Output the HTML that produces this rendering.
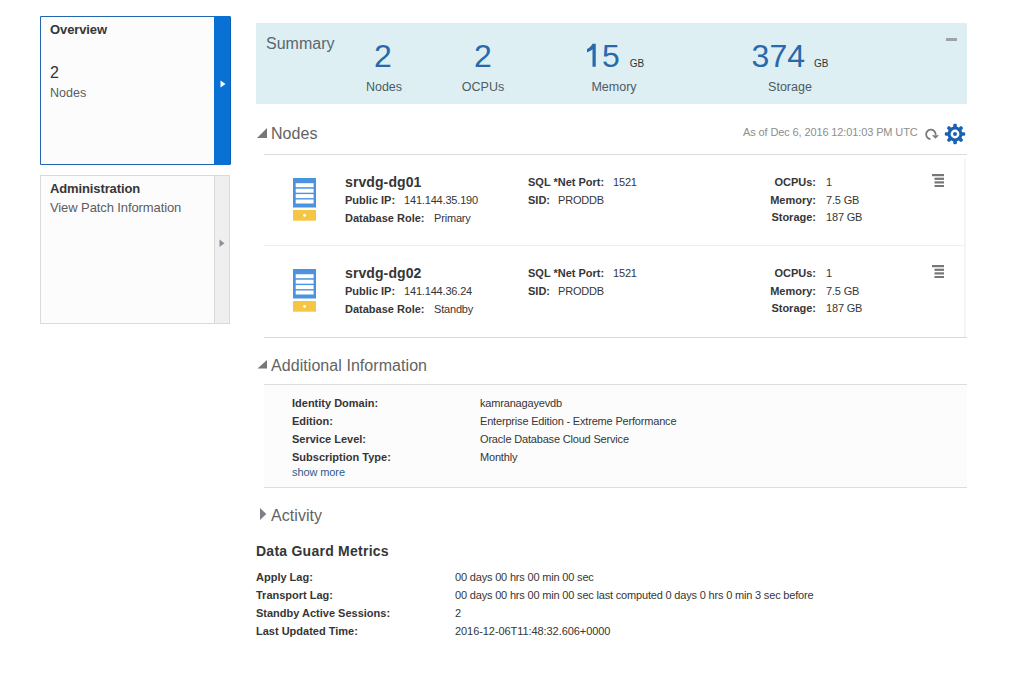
<!DOCTYPE html>
<html><head><meta charset="utf-8">
<style>
html,body{margin:0;padding:0;background:#fff;width:1031px;height:681px;overflow:hidden;position:relative}
body{font-family:"Liberation Sans",sans-serif;color:#363636}
.t{position:absolute;white-space:nowrap;line-height:20px}
.b{font-weight:bold}
.f11{font-size:11px;letter-spacing:-0.18px}
.f11.b{letter-spacing:0}.f12{font-size:12px}.f13{font-size:13px}.f14{font-size:14px}.f16{font-size:16px}
.box{position:absolute;box-sizing:border-box}
.hr{position:absolute;height:1px;background:#dcdcdc}
.num{position:absolute;font-size:32px;line-height:40px;color:#2769ab;white-space:nowrap}
.lab{position:absolute;font-size:12.5px;line-height:20px;color:#4f5a63;white-space:nowrap}
.gb{font-size:10px;color:#333;margin-left:9px}
.g{color:#5c5c5c}
.hd{color:#636363;letter-spacing:0.06px}
</style></head><body>

<!-- left nav -->
<div class="box" style="left:40px;top:16px;width:191px;height:149px;border:1px solid #2266b0;border-radius:0 2px 2px 0;background:#fcfcfc"></div>
<div class="box" style="left:214px;top:16px;width:17px;height:149px;background:#0871d3;border-right:1px solid #0b5fb6;border-radius:0 2px 2px 0"></div>
<svg style="position:absolute;left:219px;top:79px" width="8" height="10"><polygon points="1.5,1.5 6.5,5 1.5,8.5" fill="#fff"/></svg>
<div class="t f13 b" style="left:50px;top:20px;letter-spacing:-0.1px">Overview</div>
<div class="t f16" style="left:50px;top:63px;color:#333">2</div>
<div class="t g" style="left:50px;top:83px;font-size:12.5px">Nodes</div>

<div class="box" style="left:40px;top:175px;width:190px;height:149px;border:1px solid #dadada;background:#fcfcfc"></div>
<div class="box" style="left:214px;top:176px;width:15px;height:147px;background:#efefef;border-left:1px solid #dadada"></div>
<svg style="position:absolute;left:218px;top:238px" width="8" height="10"><polygon points="1.5,1.5 6.5,5.3 1.5,9.1" fill="#8a919b"/></svg>
<div class="t f13 b" style="left:50px;top:179px;letter-spacing:-0.12px">Administration</div>
<div class="t f13 g" style="left:50px;top:198px;letter-spacing:-0.1px">View Patch Information</div>

<!-- summary -->
<div class="box" style="left:256px;top:23px;width:711px;height:81px;background:#ddeff2"></div>
<div class="t f16" style="left:266px;top:34px;color:#5b6670">Summary</div>
<div class="box" style="left:946px;top:38px;width:11px;height:3px;background:#9aa3a8"></div>

<div class="num" style="left:333px;width:100px;top:36px;text-align:center">2</div>
<div class="lab" style="left:334px;width:100px;top:77px;text-align:center">Nodes</div>
<div class="num" style="left:433px;width:100px;top:36px;text-align:center">2</div>
<div class="lab" style="left:433px;width:100px;top:77px;text-align:center">OCPUs</div>
<div class="num" style="left:584.25px;top:36px"><span style="display:inline-block;width:17.8px;height:1px"></span>5<span class="gb" style="margin-left:10px">GB</span></div>
<svg style="position:absolute;left:584px;top:41px" width="16" height="28" viewBox="0 0 16 28"><path d="M8.5 2.8 L11.75 2.8 L11.75 25.8 L8.5 25.8 L8.5 8.2 C7.2 9.4 5 10.5 3 11.2 L3 8 C5 7.2 7.3 5.2 8.5 2.8Z" fill="#2769ab"/></svg>
<div class="lab" style="left:564px;width:100px;top:77px;text-align:center">Memory</div>
<div class="num" style="left:740px;width:100px;top:36px;text-align:center">374<span class="gb">GB</span></div>
<div class="lab" style="left:740px;width:100px;top:77px;text-align:center">Storage</div>

<!-- nodes header -->
<svg style="position:absolute;left:256px;top:127px" width="12" height="12"><polygon points="1,11 11,11 11,1" fill="#777"/></svg>
<div class="t f16 hd" style="left:271px;top:124px">Nodes</div>
<div class="t f11" style="left:743px;top:122px;color:#8e8e8e;letter-spacing:-0.12px">As of Dec 6, 2016 12:01:03 PM UTC</div>
<div class="hr" style="left:264px;top:154px;width:703px"></div>
<svg style="position:absolute;left:923px;top:126px" width="18" height="16" viewBox="0 0 18 16">
<path d="M7.5 13.1 A4.75 4.75 0 1 1 12.6 8.8" fill="none" stroke="#7a7a7a" stroke-width="1.8"/>
<polygon points="9,9.3 16,9.3 12.5,12.8" fill="#7a7a7a"/>
</svg>
<svg style="position:absolute;left:944.2px;top:122.9px" width="22" height="22" viewBox="-11 -11 22 22">
<g fill="#1a61b0">
<circle r="7.5"/>
<rect x="-1.75" y="-10.2" width="3.6" height="20.4" rx="1.3"/>
<rect x="-1.75" y="-10.2" width="3.6" height="20.4" rx="1.3" transform="rotate(45)"/>
<rect x="-1.75" y="-10.2" width="3.6" height="20.4" rx="1.3" transform="rotate(90)"/>
<rect x="-1.75" y="-10.2" width="3.6" height="20.4" rx="1.3" transform="rotate(135)"/>
</g>
<circle r="4.4" fill="#fff"/>
<circle r="2" fill="#1a61b0"/>
</svg>



<!-- node cards -->
<div class="box" style="left:964px;top:158px;width:2px;height:179px;background:#f5f5f5"></div>
<div class="hr" style="left:264px;top:245px;width:700px;background:#eeeeee"></div>
<div class="hr" style="left:264px;top:337px;width:703px;background:#d9d9d9"></div>

<svg style="position:absolute;left:293px;top:178px" width="23" height="43" viewBox="0 0 23 43">
<rect x="0" y="0" width="23" height="29.5" fill="#4b93df"/>
<rect x="2.7" y="5.2" width="17.9" height="4" fill="#fff"/>
<rect x="2.7" y="10.7" width="17.9" height="4" fill="#fff"/>
<rect x="2.7" y="16.1" width="17.9" height="4" fill="#fff"/>
<rect x="2.7" y="21.5" width="17.9" height="4" fill="#fff"/>
<rect x="0" y="32" width="23" height="10.7" fill="#f5c646"/>
<circle cx="11.6" cy="37.4" r="1.4" fill="#fff"/>
</svg>
<div class="t f14 b" style="letter-spacing:0.1px;left:345px;top:172px">srvdg-dg01</div>
<div class="t f11 b" style="left:345px;top:190px">Public IP:</div>
<div class="t f11" style="left:404px;top:190px">141.144.35.190</div>
<div class="t f11 b" style="left:345px;top:208px">Database Role:</div>
<div class="t f11" style="left:434px;top:208px">Primary</div>
<div class="t f11 b" style="left:528px;top:172px">SQL *Net Port:</div>
<div class="t f11" style="left:613px;top:172px">1521</div>
<div class="t f11 b" style="left:528px;top:190px">SID:</div>
<div class="t f11" style="left:558px;top:190px">PRODDB</div>
<div class="t f11 b" style="left:716px;width:100px;text-align:right;top:172px">OCPUs:</div>
<div class="t f11" style="left:826px;top:172px">1</div>
<div class="t f11 b" style="left:716px;width:100px;text-align:right;top:190px">Memory:</div>
<div class="t f11" style="left:826px;top:190px">7.5 GB</div>
<div class="t f11 b" style="left:716px;width:100px;text-align:right;top:207px">Storage:</div>
<div class="t f11" style="left:826px;top:207px">187 GB</div>
<svg style="position:absolute;left:932px;top:174px" width="12" height="13" viewBox="0 0 12 13">
<rect x="0" y="0" width="12" height="2.2" fill="#777"/>
<rect x="2.5" y="3.7" width="9.5" height="2.2" fill="#777"/>
<rect x="2.5" y="7.3" width="9.5" height="2.2" fill="#777"/>
<rect x="2.5" y="11" width="9.5" height="2.2" fill="#777"/>
</svg>

<svg style="position:absolute;left:293px;top:269px" width="23" height="43" viewBox="0 0 23 43">
<rect x="0" y="0" width="23" height="29.5" fill="#4b93df"/>
<rect x="2.7" y="5.2" width="17.9" height="4" fill="#fff"/>
<rect x="2.7" y="10.7" width="17.9" height="4" fill="#fff"/>
<rect x="2.7" y="16.1" width="17.9" height="4" fill="#fff"/>
<rect x="2.7" y="21.5" width="17.9" height="4" fill="#fff"/>
<rect x="0" y="32" width="23" height="10.7" fill="#f5c646"/>
<circle cx="11.6" cy="37.4" r="1.4" fill="#fff"/>
</svg>
<div class="t f14 b" style="letter-spacing:0.1px;left:345px;top:263px">srvdg-dg02</div>
<div class="t f11 b" style="left:345px;top:281px">Public IP:</div>
<div class="t f11" style="left:404px;top:281px">141.144.36.24</div>
<div class="t f11 b" style="left:345px;top:299px">Database Role:</div>
<div class="t f11" style="left:434px;top:299px">Standby</div>
<div class="t f11 b" style="left:528px;top:263px">SQL *Net Port:</div>
<div class="t f11" style="left:613px;top:263px">1521</div>
<div class="t f11 b" style="left:528px;top:281px">SID:</div>
<div class="t f11" style="left:558px;top:281px">PRODDB</div>
<div class="t f11 b" style="left:716px;width:100px;text-align:right;top:263px">OCPUs:</div>
<div class="t f11" style="left:826px;top:263px">1</div>
<div class="t f11 b" style="left:716px;width:100px;text-align:right;top:281px">Memory:</div>
<div class="t f11" style="left:826px;top:281px">7.5 GB</div>
<div class="t f11 b" style="left:716px;width:100px;text-align:right;top:298px">Storage:</div>
<div class="t f11" style="left:826px;top:298px">187 GB</div>
<svg style="position:absolute;left:932px;top:265px" width="12" height="13" viewBox="0 0 12 13">
<rect x="0" y="0" width="12" height="2.2" fill="#777"/>
<rect x="2.5" y="3.7" width="9.5" height="2.2" fill="#777"/>
<rect x="2.5" y="7.3" width="9.5" height="2.2" fill="#777"/>
<rect x="2.5" y="11" width="9.5" height="2.2" fill="#777"/>
</svg>

<!-- additional information -->
<svg style="position:absolute;left:256px;top:359px" width="12" height="11"><polygon points="1.5,9.5 11,9.5 11,1" fill="#777"/></svg>
<div class="t f16 hd" style="left:271px;top:356px">Additional Information</div>
<div class="box" style="left:264px;top:385px;width:703px;height:102px;background:#fcfcfc"></div>
<div class="hr" style="left:264px;top:384px;width:703px"></div>
<div class="t f11 b" style="left:292px;top:393px">Identity Domain:</div>
<div class="t f11" style="left:480px;top:393px">kamranagayevdb</div>
<div class="t f11 b" style="left:292px;top:411px">Edition:</div>
<div class="t f11" style="left:480px;top:411px">Enterprise Edition - Extreme Performance</div>
<div class="t f11 b" style="left:292px;top:429px">Service Level:</div>
<div class="t f11" style="left:480px;top:429px">Oracle Database Cloud Service</div>
<div class="t f11 b" style="left:292px;top:447px">Subscription Type:</div>
<div class="t f11" style="left:480px;top:447px">Monthly</div>
<div class="t f11" style="left:292px;top:462px;color:#2c5a8e;letter-spacing:-0.1px">show more</div>
<div class="hr" style="left:264px;top:487px;width:703px"></div>

<!-- activity -->
<svg style="position:absolute;left:258px;top:507px" width="10" height="14"><polygon points="2,1 8.3,7 2,13" fill="#7b8187"/></svg>
<div class="t f16 hd" style="left:271px;top:506px">Activity</div>

<div class="t f14 b" style="left:256px;top:541px;letter-spacing:0.25px">Data Guard Metrics</div>
<div class="t f11 b" style="left:256px;top:567px">Apply Lag:</div>
<div class="t f11" style="left:455px;top:567px">00 days 00 hrs 00 min 00 sec</div>
<div class="t f11 b" style="left:256px;top:585px">Transport Lag:</div>
<div class="t f11" style="left:455px;top:585px">00 days 00 hrs 00 min 00 sec last computed 0 days 0 hrs 0 min 3 sec before</div>
<div class="t f11 b" style="left:256px;top:603px">Standby Active Sessions:</div>
<div class="t f11" style="left:455px;top:603px">2</div>
<div class="t f11 b" style="left:256px;top:621px">Last Updated Time:</div>
<div class="t f11" style="left:455px;top:621px;letter-spacing:-0.07px">2016-12-06T11:48:32.606+0000</div>

</body></html>
